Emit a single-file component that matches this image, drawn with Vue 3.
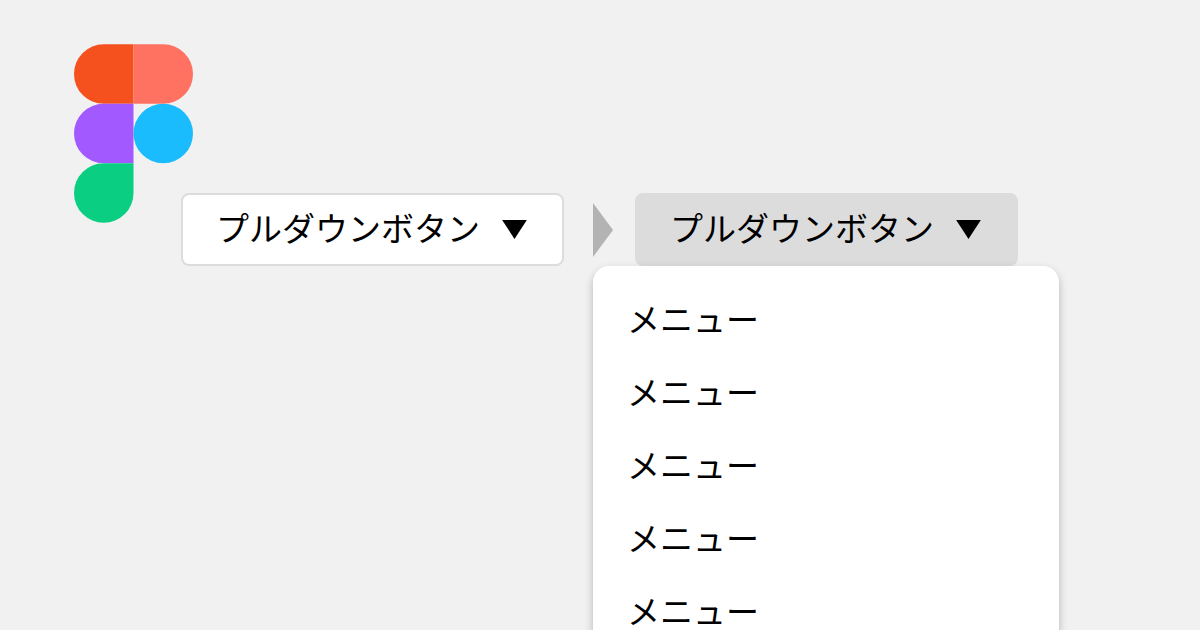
<template>
  <main class="page">
    <svg class="logo" viewBox="0 0 120 180" role="img" aria-label="Figma">
      <path d="M30 0H60V60H30A30 30 0 0 1 30 0Z" fill="#f4511e" />
      <path d="M60 0H90A30 30 0 0 1 90 60H60Z" fill="#ff7262" />
      <path d="M30 60H60V120H30A30 30 0 0 1 30 60Z" fill="#a259ff" />
      <circle cx="90" cy="90" r="30" fill="#1abcfe" />
      <path d="M30 120H60V150A30 30 0 1 1 30 120Z" fill="#0acf83" />
    </svg>

    <div class="states">
      <button type="button" class="pulldown-button">
        <span class="label">プルダウンボタン</span>
        <svg class="caret" viewBox="0 0 26 20" aria-hidden="true">
          <path d="M0 0H26L13 20Z" />
        </svg>
      </button>

      <svg class="arrow" viewBox="0 0 20 54" aria-hidden="true">
        <path d="M0 0L20 27L0 54Z" />
      </svg>

      <div class="pulldown">
        <button
          type="button"
          class="pulldown-button"
          :class="{ active: isOpen }"
          :aria-expanded="isOpen"
          @click="isOpen = !isOpen"
        >
          <span class="label">プルダウンボタン</span>
          <svg class="caret" viewBox="0 0 26 20" aria-hidden="true">
            <path d="M0 0H26L13 20Z" />
          </svg>
        </button>
        <ul v-if="isOpen" class="menu">
          <li v-for="item in menuItems" :key="item.id">
            <button type="button" class="menu-item">{{ item.label }}</button>
          </li>
        </ul>
      </div>
    </div>
  </main>
</template>

<script setup>
import { ref } from 'vue'

const isOpen = ref(true)

const menuItems = [
  { id: 1, label: 'メニュー' },
  { id: 2, label: 'メニュー' },
  { id: 3, label: 'メニュー' },
  { id: 4, label: 'メニュー' },
  { id: 5, label: 'メニュー' },
]
</script>

<style>
body {
  margin: 0;
  background-color: #f1f1f1;
}
</style>

<style scoped>
.page {
  box-sizing: border-box;
  min-height: 100vh;
  padding: 44px 74px;
  overflow: hidden;
  background-color: #f1f1f1;
  font-family: 'Noto Sans CJK JP', sans-serif;
  color: #000;
}

.logo {
  display: block;
  width: 119px;
  height: 179px;
}

/* ロゴの右下に少し重ねる */
.states {
  display: flex;
  align-items: center;
  margin: -30px 0 0 107px;
}

.pulldown-button {
  display: flex;
  align-items: center;
  gap: 22px;
  padding: 10px 35px 10px 33px;
  border: 2px solid #dcdcdc;
  border-radius: 8px;
  background-color: #fff;
  color: inherit;
  font-family: inherit;
  font-size: 33px;
  line-height: 45px;
  white-space: nowrap;
  cursor: pointer;
}

.pulldown-button.active {
  background-color: #dcdcdc;
}

.label {
  padding-bottom: 4px;
}

.caret {
  width: 25px;
  height: 19px;
}

.arrow {
  flex: none;
  width: 20px;
  height: 54px;
  margin: 0 22px 0 29px;
  fill: #b3b3b3;
}

.pulldown {
  position: relative;
}

/* メニュー */
.menu {
  position: absolute;
  top: 100%;
  left: -42px;
  box-sizing: border-box;
  width: 466px;
  margin: 0;
  padding: 16px 0;
  border-radius: 16px;
  background-color: #fff;
  box-shadow: 0 4px 8px rgba(0, 0, 0, 0.25);
  list-style: none;
}

.menu-item {
  display: block;
  width: 100%;
  padding: 14px 34px;
  border: 0;
  background: none;
  color: inherit;
  font-family: inherit;
  font-size: 33px;
  line-height: 45px;
  text-align: left;
  cursor: pointer;
}
</style>
